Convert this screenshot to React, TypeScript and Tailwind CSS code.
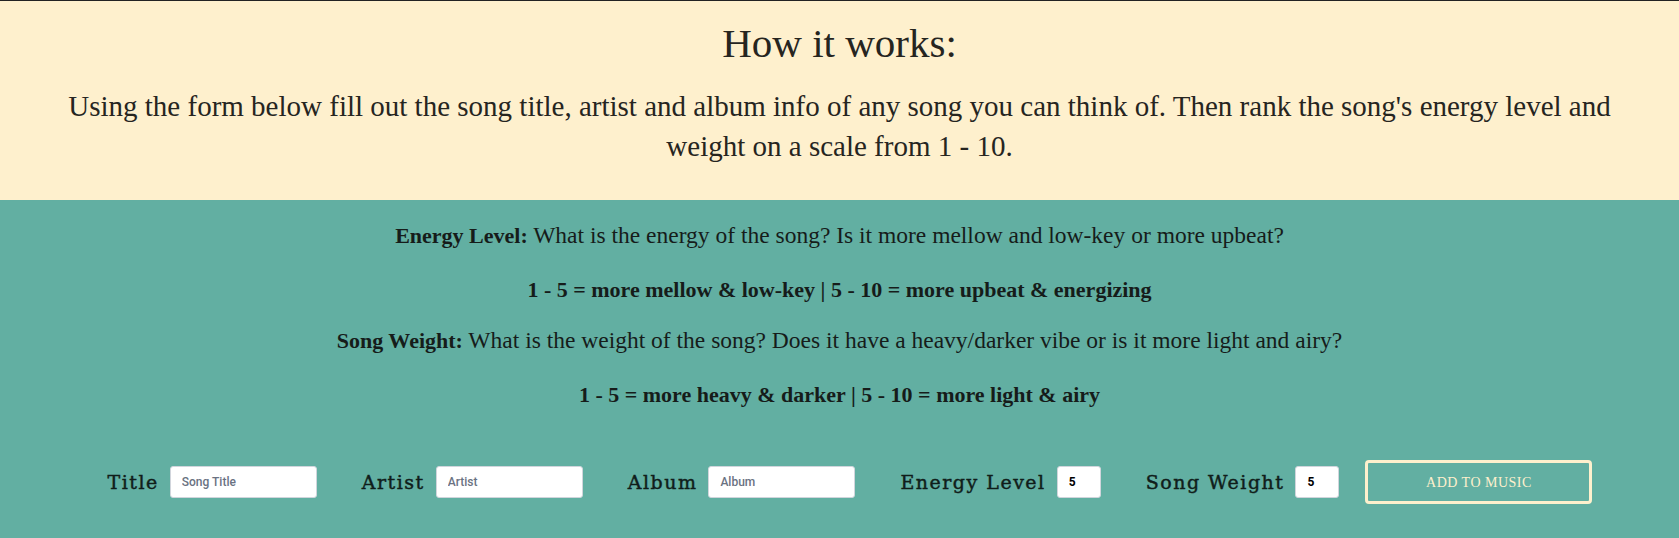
import { useState } from 'react';

const serif = { fontFamily: '"Liberation Serif", "Times New Roman", serif' };

type FieldProps = {
  label: string;
  placeholder?: string;
  value?: string;
  small?: boolean;
};

const Field = ({ label, placeholder, value, small }: FieldProps) => {
  const [val, setVal] = useState(value ?? '');
  return (
    <label className="flex items-center gap-[11px]">
      <span className="font-['DejaVu_Serif',serif] text-[19px] tracking-[1.5px] text-[#101d1a] [-webkit-text-stroke:0.45px_#101d1a]">
        {label}
      </span>
      <input
        type="text"
        value={val}
        placeholder={placeholder}
        onChange={(e) => setVal(e.target.value)}
        className={
          small
            ? 'h-[32px] w-[44px] rounded-[3px] border border-gray-300 bg-white px-[11px] font-["Roboto",sans-serif] text-[12px] font-bold text-black outline-none'
            : 'h-[32px] w-[147px] rounded-[3px] border border-gray-300 bg-white px-[11px] font-["Roboto",sans-serif] text-[12px] font-medium text-black outline-none placeholder:text-gray-500'
        }
      />
    </label>
  );
};

export default function App() {
  return (
    <div className="min-h-screen bg-[#62afa2]" style={serif}>
      {/* intro */}
      <section className="h-[200px] border-t border-[#222] bg-[#fef0cd] pt-[18px] text-center text-[#26251f]">
        <h2 className="text-[41px] leading-[48px]">How it works:</h2>
        <p className="mx-auto mt-[19px] px-[50px] text-[29px] leading-[40px]">
          Using the form below fill out the song title, artist and album info of any song you can
          think of. Then rank the song's energy level and weight on a scale from 1 - 10.
        </p>
      </section>

      {/* scale explanations */}
      <section className="flex flex-col items-center pt-[19px] text-[23.5px] leading-[33px] text-[#161c1a]">
        <p>
          <strong className="text-[22px]">Energy Level:</strong> What is the energy of the song? Is
          it more mellow and low-key or more upbeat?
        </p>
        <p className="mt-[21px] text-[22px] font-bold">
          1 - 5 = more mellow &amp; low-key | 5 - 10 = more upbeat &amp; energizing
        </p>
        <p className="mt-[18px]">
          <strong className="text-[22px]">Song Weight:</strong> What is the weight of the song?
          Does it have a heavy/darker vibe or is it more light and airy?
        </p>
        <p className="mt-[21px] text-[22px] font-bold">
          1 - 5 = more heavy &amp; darker | 5 - 10 = more light &amp; airy
        </p>
      </section>

      {/* form */}
      <form
        className="mt-[49px] flex items-center justify-center pl-[21px] pb-[30px]"
        onSubmit={(e) => e.preventDefault()}
      >
        <div className="flex items-center gap-[45px]">
          <Field label="Title" placeholder="Song Title" />
          <Field label="Artist" placeholder="Artist" />
          <Field label="Album" placeholder="Album" />
          <Field label="Energy Level" value="5" small />
          <Field label="Song Weight" value="5" small />
        </div>
        <button
          type="submit"
          className="ml-[26px] h-[44px] w-[227px] rounded-[4px] border-[3px] border-[#fef0cd] text-[14px] tracking-[0.5px] text-[#fef0cd]"
        >
          ADD TO MUSIC
        </button>
      </form>
    </div>
  );
}
